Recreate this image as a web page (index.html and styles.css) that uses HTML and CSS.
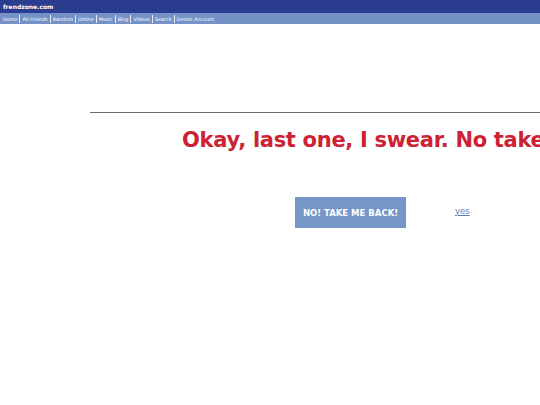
FILE: index.html
```html
<!DOCTYPE html>
<html>
<head>
<meta charset="utf-8">
<link rel="stylesheet" href="styles.css">
</head>
<body>
<div class="topbar"><span class="logo">frendzone.com</span></div>
<nav class="nav">
  <a href="#">Home</a><a href="#">All Friends</a><a href="#">Random</a><a href="#">Online</a><a href="#">Music</a><a href="#">Blog</a><a href="#">Videos</a><a href="#">Search</a><a href="#">Delete Account</a>
</nav>
<main class="main">
  <hr class="rule">
  <h1 class="title">Okay, last one, I swear. No take me back?</h1>
  <div class="actions">
    <button class="back">NO! TAKE ME BACK!</button>
    <a class="yes" href="#">yes</a>
  </div>
</main>
</body>
</html>
```
FILE: styles.css
```css
html, body {
  margin: 0;
  padding: 0;
  background: #fff;
  font-family: "DejaVu Sans", Verdana, sans-serif;
  overflow: hidden;
}
.topbar {
  background: #2b3d8e;
  height: 13px;
  display: flex;
  align-items: center;
  padding-left: 3px;
}
.logo {
  color: #fff;
  font-weight: bold;
  font-size: 6px;
}
.nav {
  background: #7592c6;
  height: 11px;
  display: flex;
  align-items: center;
  padding-left: 1px;
}
.nav a {
  color: #fff;
  font-size: 4.9px;
  text-decoration: none;
  padding: 0 2px;
  border-left: 1px solid #e8ecf5;
  line-height: 8px;
}
.nav a:first-child {
  border-left: none;
}
.main {
  margin-left: 90px;
  width: 700px;
  padding-top: 88px;
}
.rule {
  margin: 0;
  border: none;
  border-top: 1px solid #666;
  height: 0;
}
.title {
  margin: 14px 0 0 92px;
  color: #cc2233;
  font-size: 21px;
  font-weight: bold;
  white-space: nowrap;
  line-height: 26px;
  letter-spacing: -0.3px;
}
.actions {
  margin: 44px 0 0 205px;
  display: flex;
  align-items: center;
}
.back {
  background: #7596c8;
  color: #fff;
  border: none;
  font-family: "DejaVu Sans", Verdana, sans-serif;
  font-weight: bold;
  font-size: 8.5px;
  width: 111px;
  height: 31px;
  padding: 0;
}
.yes {
  margin-left: 49px;
  margin-bottom: 4px;
  color: #5a7bb8;
  font-size: 8.5px;
}
```
